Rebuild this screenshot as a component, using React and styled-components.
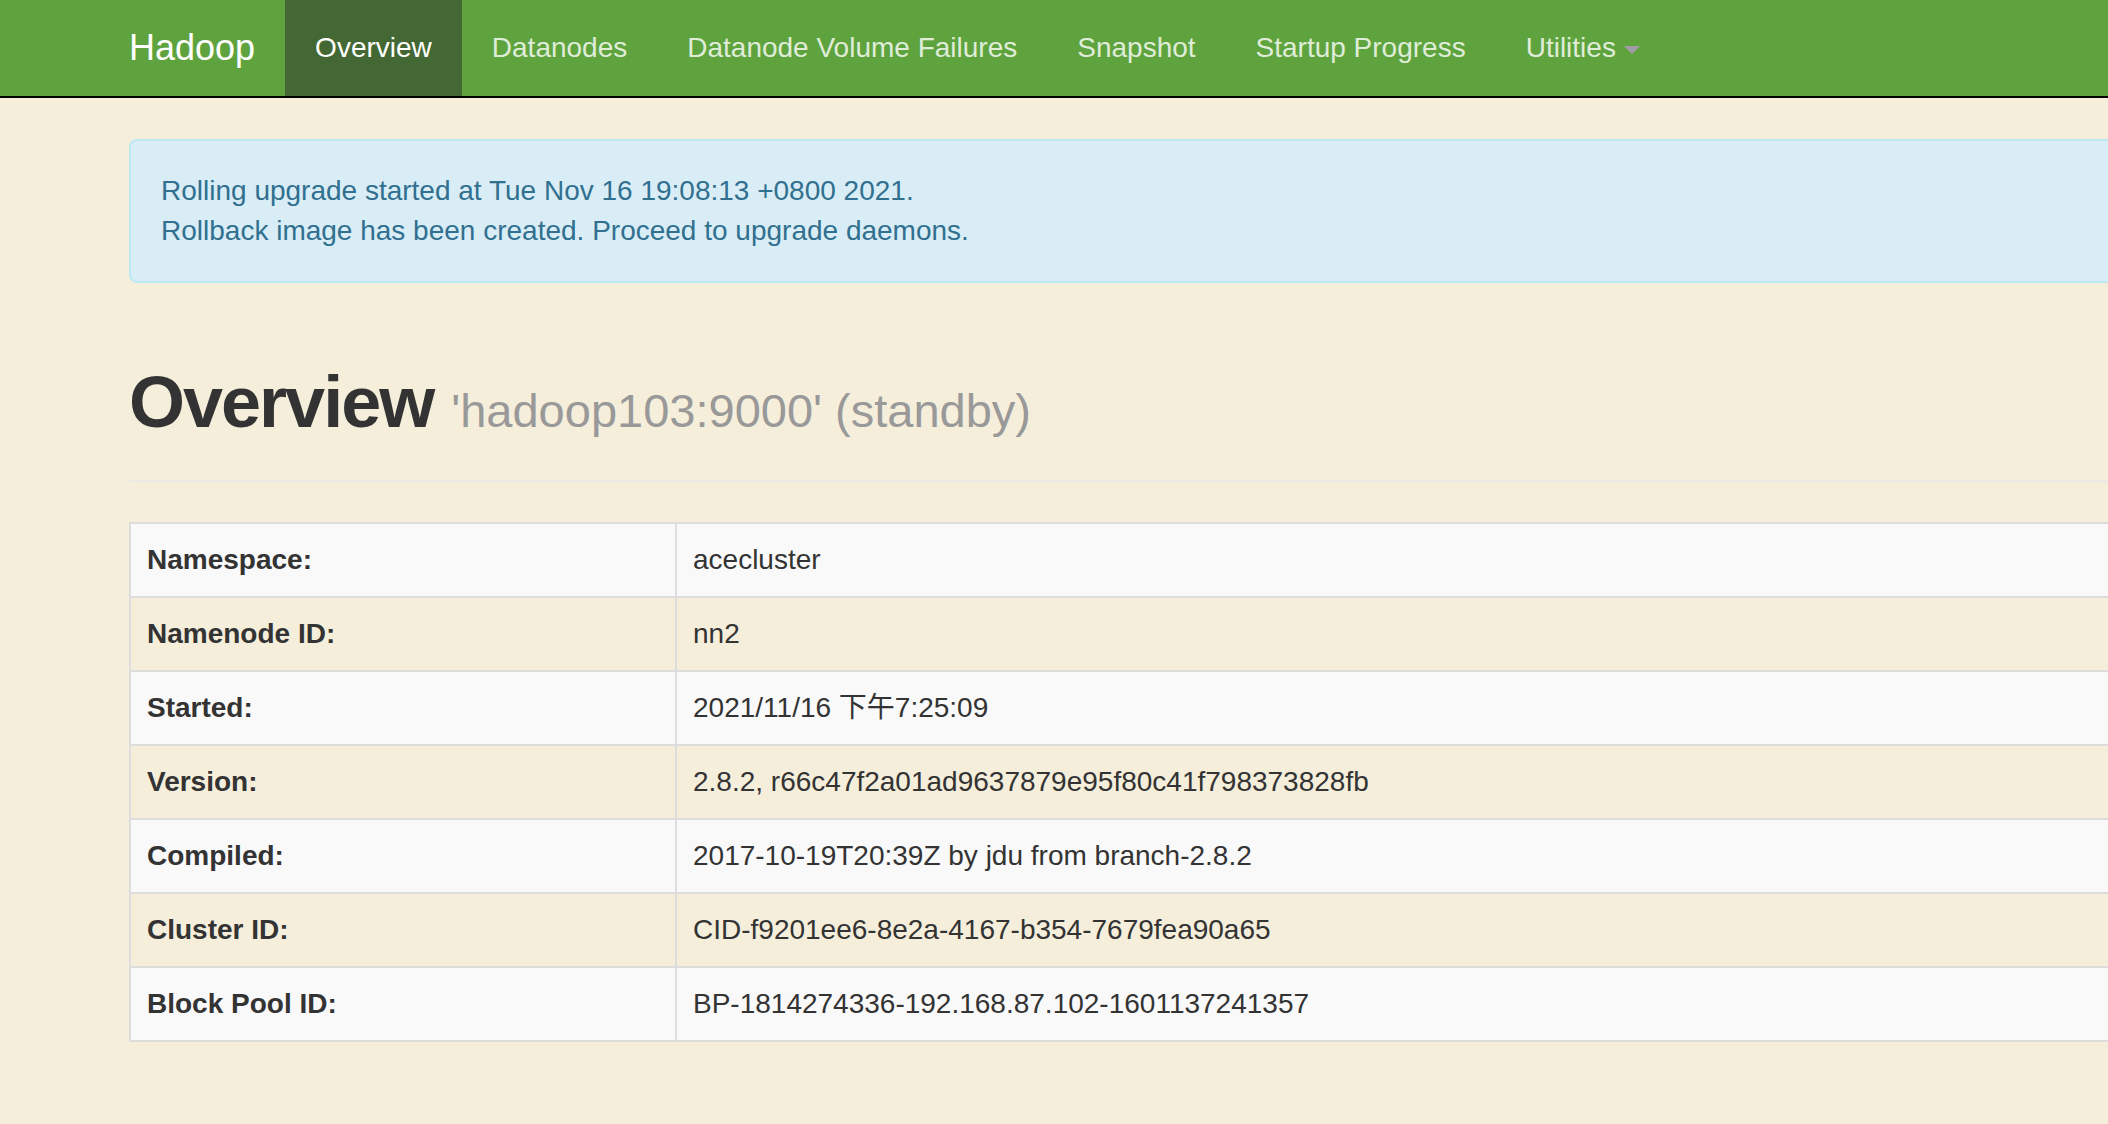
import React from 'react'
import styled, { createGlobalStyle } from 'styled-components'

const GlobalStyle = createGlobalStyle`
  html, body {
    margin: 0;
    padding: 0;
    overflow: hidden;
  }
  body {
    background: #f5eedb;
    color: #333;
    font-family: "Liberation Sans", Helvetica, Arial, "Noto Sans CJK SC", sans-serif;
    font-size: 28px;
    line-height: 40px;
  }
`

const NAV = ['Overview', 'Datanodes', 'Datanode Volume Failures', 'Snapshot', 'Startup Progress']

const INFO = [
    ['Namespace:', 'acecluster'],
    ['Namenode ID:', 'nn2'],
    ['Started:', '2021/11/16 下午7:25:09'],
    ['Version:', '2.8.2, r66c47f2a01ad9637879e95f80c41f798373828fb'],
    ['Compiled:', '2017-10-19T20:39Z by jdu from branch-2.8.2'],
    ['Cluster ID:', 'CID-f9201ee6-8e2a-4167-b354-7679fea90a65'],
    ['Block Pool ID:', 'BP-1814274336-192.168.87.102-1601137241357'],
]

function App() {
    return (
        <>
            <GlobalStyle />
            <Navbar>
                <NavInner>
                    <Brand href="#">Hadoop</Brand>
                    <NavList>
                        {NAV.map((item, i) => (
                            <li key={item}>
                                <NavLink href="#" $active={i === 0}>{item}</NavLink>
                            </li>
                        ))}
                        <li>
                            <NavLink href="#">Utilities<Caret /></NavLink>
                        </li>
                    </NavList>
                </NavInner>
            </Navbar>

            <Container>
                <Alert>
                    Rolling upgrade started at Tue Nov 16 19:08:13 +0800 2021.<br />
                    Rollback image has been created. Proceed to upgrade daemons.
                </Alert>

                <PageHeader>
                    <Title>Overview <Small>'hadoop103:9000' (standby)</Small></Title>
                </PageHeader>

                <Table>
                    <tbody>
                        {INFO.map(([k, v]) => (
                            <Row key={k}>
                                <Th>{k}</Th>
                                <Td>{v}</Td>
                            </Row>
                        ))}
                    </tbody>
                </Table>
            </Container>
        </>
    )
}

export default App

const Navbar = styled.nav`
  background: #5fa33e;
  border-bottom: 2px solid #000;
`
const NavInner = styled.div`
  box-sizing: border-box;
  width: 2340px;
  margin-left: 99px;
  padding: 0 30px;
  display: flex;
  align-items: stretch;
`
const Brand = styled.a`
  display: block;
  margin-left: -30px;
  padding: 28px 30px;
  font-size: 36px;
  line-height: 40px;
  color: #fff;
  text-decoration: none;
`
const NavList = styled.ul`
  display: flex;
  list-style: none;
  margin: 0;
  padding: 0;
`
const NavLink = styled.a`
  display: block;
  padding: 28px 30px;
  font-size: 28px;
  line-height: 40px;
  text-decoration: none;
  color: ${p => (p.$active ? '#fff' : '#dfedd8')};
  background: ${p => (p.$active ? '#446834' : 'transparent')};
`
const Caret = styled.span`
  display: inline-block;
  width: 0;
  height: 0;
  margin-left: 8px;
  vertical-align: middle;
  border-top: 8px solid #a09ca8;
  border-left: 8px solid transparent;
  border-right: 8px solid transparent;
`
const Container = styled.main`
  box-sizing: border-box;
  width: 2340px;
  margin-left: 99px;
  padding: 41px 30px 0;
`
const Alert = styled.div`
  padding: 30px;
  border: 2px solid #bce8f1;
  border-radius: 8px;
  background: #d9edf7;
  color: #31708f;
`
const PageHeader = styled.div`
  margin: 80px 0 40px;
  padding-bottom: 18px;
  border-bottom: 2px solid #ebe9e3;
`
const Title = styled.h1`
  margin: 0 0 20px;
  font-size: 72px;
  line-height: 79px;
  font-weight: 700;
  letter-spacing: -2px;
  color: #333;
`
const Small = styled.small`
  font-size: 47px;
  line-height: 1;
  font-weight: 400;
  letter-spacing: 0;
  color: #999;
`
const Table = styled.table`
  width: 100%;
  border-collapse: collapse;
  border: 2px solid #ddd;
  margin-bottom: 40px;
`
const Row = styled.tr`
  &:nth-child(odd) {
    background: #f9f9f9;
  }
`
const Th = styled.th`
  width: 512px;
  padding: 16px;
  border: 2px solid #ddd;
  text-align: left;
  vertical-align: top;
  font-weight: 700;
`
const Td = styled.td`
  padding: 16px;
  border: 2px solid #ddd;
  vertical-align: top;
`
